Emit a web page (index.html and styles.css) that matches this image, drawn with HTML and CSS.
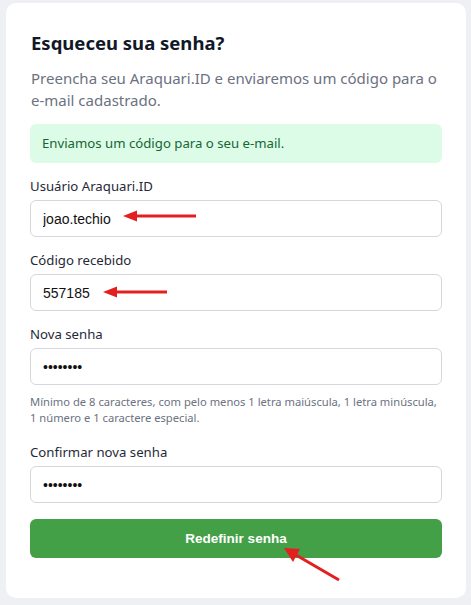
FILE: index.html
```html
<!DOCTYPE html>
<html lang="pt-BR">
<head>
<meta charset="utf-8">
<title>Esqueceu sua senha?</title>
<link rel="stylesheet" href="styles.css">
</head>
<body>
<div class="card">
  <h1 class="title">Esqueceu sua senha?</h1>
  <p class="subtitle">Preencha seu Araquari.ID e enviaremos um código para o e-mail cadastrado.</p>
  <div class="alert">Enviamos um código para o seu e-mail.</div>
  <form class="form">
    <div class="field">
      <label class="label">Usuário Araquari.ID</label>
      <input class="input" type="text" value="joao.techio">
    </div>
    <div class="field">
      <label class="label">Código recebido</label>
      <input class="input" type="text" value="557185">
    </div>
    <div class="field">
      <label class="label">Nova senha</label>
      <input class="input" type="password" value="12345678">
      <p class="hint">Mínimo de 8 caracteres, com pelo menos 1 letra maiúscula, 1 letra minúscula, 1 número e 1 caractere especial.</p>
    </div>
    <div class="field">
      <label class="label">Confirmar nova senha</label>
      <input class="input" type="password" value="12345678">
    </div>
    <button class="button" type="button">Redefinir senha</button>
  </form>
</div>
<svg class="arrows" width="471" height="605" viewBox="0 0 471 605">
  <g fill="#e31f1f" stroke="#e31f1f">
    <line x1="135" y1="216" x2="196" y2="216" stroke-width="3"/>
    <polygon points="123,216 137,210.5 137,221.5" stroke="none"/>
    <line x1="115" y1="292" x2="167" y2="292" stroke-width="3"/>
    <polygon points="103,292 117,286.5 117,297.5" stroke="none"/>
    <line x1="296" y1="555" x2="339" y2="580" stroke-width="3"/>
    <polygon points="284,548 300,549 293,562" stroke="none"/>
  </g>
</svg>
</body>
</html>
```
FILE: styles.css
```css
* { box-sizing: border-box; }
html, body { margin: 0; padding: 0; }
body {
  background: #eef0f4;
  font-family: "Noto Sans", "Open Sans", sans-serif;
  width: 471px;
  height: 605px;
  position: relative;
  overflow: hidden;
  padding: 3px 5px 0 6px;
}
.card {
  background: #ffffff;
  border-radius: 10px;
  width: 460px;
  height: 595px;
  padding: 26px 24px 0 24px;
}
.title {
  margin: 0 0 0 1px;
  font-size: 18.5px;
  line-height: 28px;
  font-weight: 700;
  color: #111827;
}
.subtitle {
  margin: 10px 0 0 1px;
  font-size: 15px;
  line-height: 22px;
  color: #6b7280;
}
.alert {
  margin-top: 13px;
  height: 39px;
  background: #dcfce7;
  color: #166534;
  border-radius: 6px;
  font-size: 13.2px;
  line-height: 39px;
  padding: 0 12px;
}
.form { display: flex; flex-direction: column; margin-top: 13px; }
.field { display: flex; flex-direction: column; margin-bottom: 13px; }
.label {
  font-size: 13.2px;
  line-height: 20px;
  color: #1f2937;
  margin-bottom: 4px;
}
.input {
  height: 37px;
  border: 1px solid #d6d6de;
  border-radius: 6px;
  padding: 0 12px;
  font-family: "Liberation Sans", Arial, sans-serif;
  font-size: 14px;
  color: #111;
  background: #fff;
  outline: none;
}
.hint {
  margin: 9px 0 3px;
  font-size: 11.2px;
  line-height: 16px;
  color: #6b7280;
}
.button {
  margin-top: 3px;
  height: 39px;
  border: none;
  border-radius: 6px;
  background: #43a047;
  color: #fff;
  font-family: "Liberation Sans", Arial, sans-serif;
  font-weight: 700;
  font-size: 13.5px;
}
.arrows { position: absolute; left: 0; top: 0; pointer-events: none; }
```
